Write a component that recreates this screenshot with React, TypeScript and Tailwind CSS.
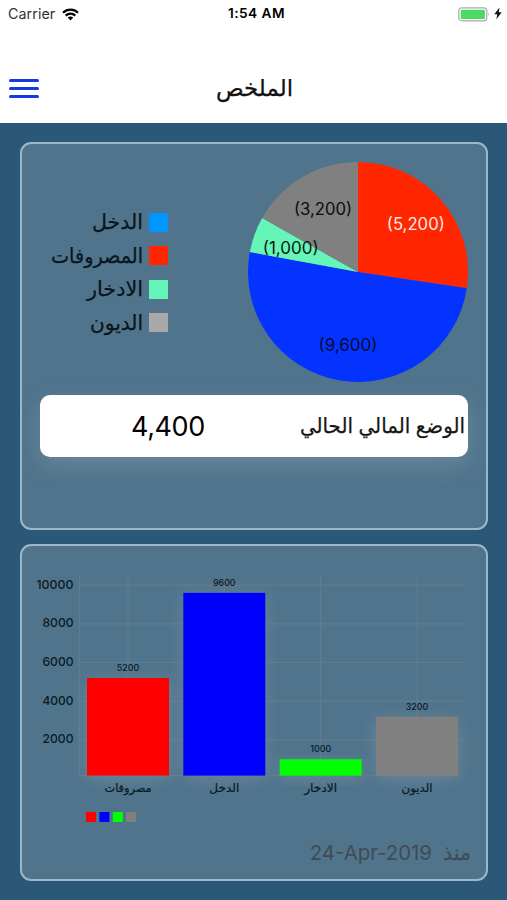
import React from "react";

const legend = [
  { label: "الدخل", width: 51, swatch: "bg-[#0096ff]" },
  { label: "المصروفات", width: 92, swatch: "bg-[#ff2600]" },
  { label: "الادخار", width: 56, swatch: "bg-[#66f5b8]" },
  { label: "الديون", width: 53, swatch: "bg-[#a9a9a9]" },
];

const slices = [
  { value: 5200, fill: "#ff2600", text: "(5,200)", x: 167.8, y: 62, ink: "#ffe9e4", w: 58 },
  { value: 9600, fill: "#0433ff", text: "(9,600)", x: 100, y: 183, ink: "#030b33", w: 59 },
  { value: 1000, fill: "#66f5b8", text: "(1,000)", x: 42.7, y: 85.5, ink: "#08180f", w: 56 },
  { value: 3200, fill: "#808080", text: "(3,200)", x: 75, y: 46.5, ink: "#0c0c0c", w: 58 },
];

const bars = [
  { label: "مصروفات", value: 5200, x: 65, fill: "#ff0000", w: 47 },
  { label: "الدخل", value: 9600, x: 161.3, fill: "#0000ff", w: 30 },
  { label: "الادخار", value: 1000, x: 257.7, fill: "#00ff00", w: 33 },
  { label: "الديون", value: 3200, x: 354, fill: "#808080", w: 31 },
];

const ticks = [10000, 8000, 6000, 4000, 2000];
const BASE = 229.6;
const yOf = (v: number) => 232.6 - v * 0.01935;

function Pie() {
  const total = slices.reduce((s, p) => s + p.value, 0);
  let angle = 0;
  const point = (a: number) => `${110 + 110 * Math.sin(a)} ${110 - 110 * Math.cos(a)}`;
  const paths = slices.map((s) => {
    const start = angle;
    angle += (s.value / total) * Math.PI * 2;
    const large = angle - start > Math.PI ? 1 : 0;
    return <path key={s.text} fill={s.fill} d={`M110 110L${point(start)}A110 110 0 ${large} 1 ${point(angle)}Z`} />;
  });
  return (
    <svg width="220" height="220" viewBox="0 0 220 220" className="shrink-0">
      {paths}
      {slices.map((s) => (
        <text key={s.text} x={s.x} y={s.y + 6} fill={s.ink} fontSize="16.8" textAnchor="middle" textLength={s.w} lengthAdjust="spacingAndGlyphs">
          {s.text}
        </text>
      ))}
    </svg>
  );
}

function BarChart() {
  return (
    <svg width="464" height="280" viewBox="0 0 464 280" className="block">
      <defs>
        <filter id="glow" x="-40%" y="-40%" width="180%" height="180%">
          <feGaussianBlur stdDeviation="8" />
        </filter>
      </defs>
      {bars.map((b) => (
        <rect key={b.label} x={b.x} y={yOf(b.value) + 3} width="82" height={BASE - yOf(b.value)} fill="#a3afb8" opacity="0.32" filter="url(#glow)" />
      ))}
      <g fill="none" stroke="#76858e" strokeWidth="1.2" opacity="0.45">
        {ticks.map((t) => (
          <path key={t} d={`M58 ${yOf(t)}H442`} />
        ))}
        {bars.map((b) => (
          <path key={b.label} d={`M${b.x + 41} 29V${BASE}`} />
        ))}
        <path d={`M57.5 30V${BASE}H442`} />
      </g>
      {ticks.map((t) => (
        <text key={t} x="51.5" y={yOf(t) + 3.4} fill="#0a1a24" fontSize="12" fontWeight="500" textAnchor="end" textLength={t === 10000 ? 37 : 31} lengthAdjust="spacingAndGlyphs">
          {t}
        </text>
      ))}
      {bars.map((b) => (
        <g key={b.label}>
          <rect x={b.x} y={yOf(b.value)} width="82" height={BASE - yOf(b.value)} fill={b.fill} />
          <text x={b.x + 41} y={yOf(b.value) - 7} fill="#0a1a24" fontSize="8.6" fontWeight="500" textAnchor="middle" textLength={b.value === 1000 ? 21 : 22.5} lengthAdjust="spacingAndGlyphs">
            {b.value}
          </text>
          <text x={b.x + 41} y="245.5" direction="rtl" fill="#0a1a24" stroke="#0a1a24" strokeWidth="0.2" fontSize="11.5" textAnchor="middle" textLength={b.w} lengthAdjust="spacingAndGlyphs">
            {b.label}
          </text>
        </g>
      ))}
      {bars.map((b, i) => (
        <rect key={b.label} x={64 + i * 13.4} y="266" width="10" height="10" fill={b.fill} />
      ))}
    </svg>
  );
}

function ArabicLine({ text, width, size, color }: { text: string; width: number; size: number; color: string }) {
  return (
    <svg width={width} height="32" className="shrink-0 overflow-visible">
      <text x={width} y="22.7" direction="rtl" fill={color} stroke={color} strokeWidth="0.25" fontSize={size} textLength={width} lengthAdjust="spacingAndGlyphs">
        {text}
      </text>
    </svg>
  );
}

export default function App() {
  return (
    <div className="flex h-[900px] w-[507px] flex-col overflow-hidden bg-[#2b5876] font-[Inter,'DejaVu_Sans',sans-serif]">
      <header className="flex h-[123px] shrink-0 flex-col bg-white text-black">
        <div className="grid h-7 grid-cols-3 items-center pl-2 pr-[5px]">
          <div className="flex items-center gap-[7px]">
            <span className="text-[14.3px] tracking-[0.05px] text-[#333]">Carrier</span>
            <svg width="17" height="13" viewBox="0 0 17 13" fill="none" stroke="#000" strokeWidth="2.2">
              <path d="M1 4.8C5.2.6 11.8.6 16 4.8M3.7 7.6C6.4 5 10.6 5 13.3 7.6" />
              <path d="M5.7 9.6Q8.5 7.2 11.3 9.6L8.5 12.4Z" fill="#000" stroke="none" />
            </svg>
          </div>
          <div className="translate-x-[1.5px] -translate-y-px text-center text-[13.7px] font-semibold tracking-[0.45px]">1:54 AM</div>
          <div className="flex items-center justify-end gap-1">
            <svg width="32" height="15" viewBox="0 0 32 15">
              <rect x="0.8" y="0.8" width="28" height="13" rx="3" fill="#fff" stroke="#aaa" strokeWidth="1.2" />
              <rect x="2.7" y="2.7" width="24.2" height="9.2" rx="1" fill="#4cd964" />
              <path d="M30.2 5.2Q32 7.3 30.2 9.4Z" fill="#aaa" />
            </svg>
            <svg width="8" height="13" viewBox="0 0 8 13" className="-translate-y-px">
              <path d="M5.5.5.3 7.3H3.3L2.4 12.2 7.7 5.2H4.7Z" fill="#111" />
            </svg>
          </div>
        </div>
        <div className="grid grow grid-cols-[1fr_76px_1fr] items-center pb-[7px] pl-[9px] pt-2">
          <div className="mt-[25px] flex w-[30px] flex-col gap-[5px]">
            <div className="h-[3px] rounded-full bg-[#1238e8]" />
            <div className="h-[3px] rounded-full bg-[#1238e8]" />
            <div className="h-[3px] rounded-full bg-[#1238e8]" />
          </div>
          <div className="mt-[25px] -translate-x-1">
            <ArabicLine text="الملخص" width={77} size={23} color="#111" />
          </div>
        </div>
      </header>

      <main className="flex flex-col gap-[14px] pl-5 pt-[19px]">
        <section className="flex h-[388px] w-[468px] flex-col rounded-[11px] border-2 border-[#9db7c9] bg-[#50748c]">
          <div className="flex h-[251px] items-start justify-between pl-[29px] pr-[18px] pt-[18px]">
            <div className="flex w-[117px] flex-col gap-[1.5px] pt-[44px]">
              {legend.map((l) => (
                <div key={l.label} className="flex h-8 items-center justify-end gap-[6px]">
                  <ArabicLine text={l.label} width={l.width} size={20.5} color="#0a141b" />
                  <div className={`h-[19px] w-[19px] ${l.swatch}`} />
                </div>
              ))}
            </div>
            <Pie />
          </div>
          <div className="ml-[18px] flex h-[62px] w-[428px] items-center justify-between rounded-[10px] bg-white pl-[91px] pr-[3px] shadow-[0_8px_22px_rgba(175,195,205,0.25)]">
            <span className="translate-y-px text-[27px] tracking-[-0.4px] text-black">4,400</span>
            <ArabicLine text="الوضع المالي الحالي" width={165} size={20.5} color="#151515" />
          </div>
        </section>

        <section className="flex h-[337px] w-[468px] flex-col rounded-[11px] border-2 border-[#9db7c9] bg-[#50748c]">
          <BarChart />
          <div className="flex h-[53px] items-center justify-end gap-[11px] pr-[15px] pt-px">
            <span className="text-[20.4px] text-[#3f4c55]">24-Apr-2019</span>
            <ArabicLine text="منذ" width={28} size={20} color="#3f4c55" />
          </div>
        </section>
      </main>
    </div>
  );
}
